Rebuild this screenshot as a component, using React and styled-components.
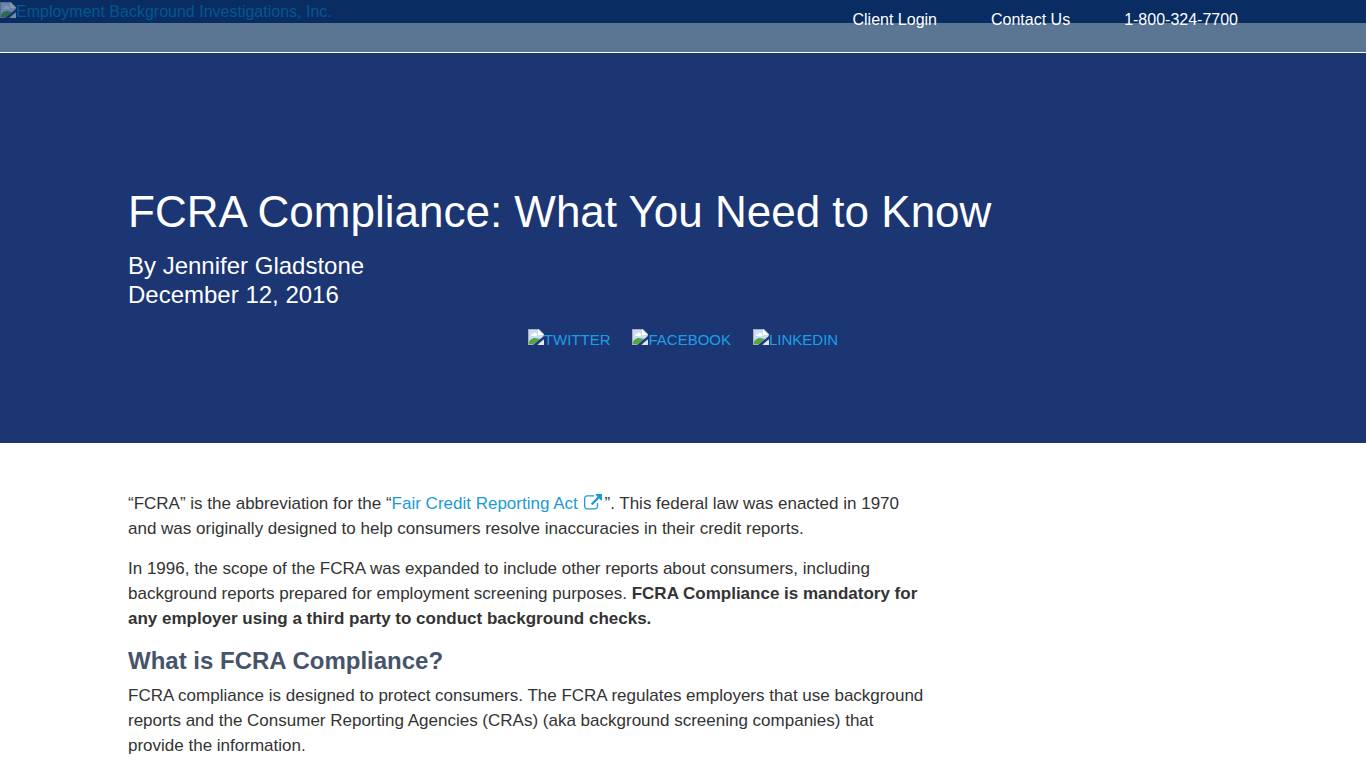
import React from "react";
import styled, { createGlobalStyle } from "styled-components";

const socialLinks = ["TWITTER", "FACEBOOK", "LINKEDIN"];

const BrokenImage = () => (
  <MissingIcon viewBox="0 0 16 16" aria-hidden="true">
    <path d="M0 0h11l5 5v11H0z" fill="#a9adb3" />
    <path d="M1 1h9l5 5v9H1z" fill="#c9dcf8" />
    <path d="M10 0l6 6h-6z" fill="#fff" />
    <path d="M3 7a2 2 0 0 1 2-2 2 2 0 0 1 4 2z" fill="#fff" />
    <path d="M1 15v-2c1-2 3-4 6-4l5 1-6 5z" fill="#52a83b" />
    <path d="M16 7v3l-7 6H5z" fill="#1c3573" />
    <path d="M16 11v5h-6z" fill="#e4e6ea" />
  </MissingIcon>
);

const ExternalLink = () => (
  <LinkIcon viewBox="0 0 1792 1792" aria-hidden="true">
    <path
      fill="currentColor"
      d="M1408 928v320q0 119-84.5 203.5t-203.5 84.5h-832q-119 0-203.5-84.5t-84.5-203.5v-832q0-119 84.5-203.5t203.5-84.5h704q14 0 23 9t9 23v64q0 14-9 23t-23 9h-704q-66 0-113 47t-47 113v832q0 66 47 113t113 47h832q66 0 113-47t47-113v-320q0-14 9-23t23-9h64q14 0 23 9t9 23zm384-864v512q0 26-19 45t-45 19-45-19l-176-176-652 652q-10 10-23 10t-23-10l-114-114q-10-10-10-23t10-23l652-652-176-176q-19-19-19-45t19-45 45-19h512q26 0 45 19t19 45z"
    />
  </LinkIcon>
);

const App = () => {
  return (
    <>
      <GlobalStyle />
      <Header>
        <LogoLink href="#home">
          <BrokenImage />
          Employment Background Investigations, Inc.
        </LogoLink>
        <TopNav>
          <TopLink href="#login">Client Login</TopLink>
          <TopLink href="#contact">Contact Us</TopLink>
          <TopLink href="tel:18003247700">1-800-324-7700</TopLink>
        </TopNav>
      </Header>

      <Hero>
        <Container>
          <Title>FCRA Compliance: What You Need to Know</Title>
          <Byline>
            By Jennifer Gladstone
            <br />
            December 12, 2016
          </Byline>
          <Social>
            {socialLinks.map((name) => (
              <SocialLink key={name} href={"#" + name.toLowerCase()}>
                <BrokenImage />
                {name}
              </SocialLink>
            ))}
          </Social>
        </Container>
      </Hero>

      <Container>
        <Article>
          <Text>
            “FCRA” is the abbreviation for the “
            <TextLink href="#fcra">
              Fair Credit Reporting Act <ExternalLink />
            </TextLink>
            ”. This federal law was enacted in 1970 and was originally designed
            to help consumers resolve inaccuracies in their credit reports.
          </Text>
          <Text>
            In 1996, the scope of the FCRA was expanded to include other reports
            about consumers, including background reports prepared for
            employment screening purposes.{" "}
            <strong>
              FCRA Compliance is mandatory for any employer using a third party
              to conduct background checks.
            </strong>
          </Text>
          <SubTitle>What is FCRA Compliance?</SubTitle>
          <Text>
            FCRA compliance is designed to protect consumers. The FCRA regulates
            employers that use background reports and the Consumer Reporting
            Agencies (CRAs) (aka background screening companies) that provide
            the information.
          </Text>
        </Article>
      </Container>
    </>
  );
};

export default App;

const GlobalStyle = createGlobalStyle`
  * {
    box-sizing: border-box;
  }

  body {
    margin: 0;
    background: #fff;
    color: #333;
    font-family: "Liberation Sans", Arial, sans-serif;
    font-size: 17px;
    line-height: 25px;
  }
`;

const Container = styled.div`
  max-width: 1366px;
  margin: 0 auto;
  padding: 0 128px;
`;

const Header = styled.header`
  display: flex;
  justify-content: space-between;
  align-items: flex-start;
  height: 53px;
  padding-right: 128px;
  background: linear-gradient(#092d62 23px, #5a7693 23px);
  border-bottom: 1px solid #fff;
`;

const LogoLink = styled.a`
  display: flex;
  color: #035791;
  font-size: 16px;
  line-height: 24px;
  text-decoration: none;

  svg {
    margin-top: 2px;
    opacity: 0.5;
  }
`;

const TopNav = styled.nav`
  display: flex;
  gap: 54px;
  padding-top: 8px;
`;

const TopLink = styled.a`
  color: #fff;
  font-size: 16px;
  line-height: 24px;
  text-decoration: none;
`;

const MissingIcon = styled.svg`
  width: 16px;
  height: 16px;
  flex: none;
`;

const Hero = styled.section`
  min-height: 390px;
  padding: 132px 0 88px;
  background: #1c3573;
  color: #fff;
`;

const Title = styled.h1`
  margin: 0 0 12px;
  font-size: 44px;
  font-weight: 400;
  line-height: 54px;
`;

const Byline = styled.p`
  margin: 0 0 20px;
  font-size: 24px;
  line-height: 29px;
`;

const Social = styled.div`
  display: flex;
  justify-content: center;
  gap: 22px;
`;

const SocialLink = styled.a`
  display: flex;
  color: #1ba0e8;
  font-size: 15px;
  line-height: 22px;
  text-decoration: none;
`;

const Article = styled.article`
  max-width: 800px;
  padding-top: 48px;
`;

const Text = styled.p`
  margin: 0 0 15px;

  &:last-child {
    margin-bottom: 0;
  }
`;

const TextLink = styled.a`
  color: #1a9bd7;
  text-decoration: none;
`;

const LinkIcon = styled.svg`
  width: 18px;
  height: 18px;
  margin: 0 2px;
  vertical-align: -3px;
`;

const SubTitle = styled.h2`
  margin: 0 0 8px;
  color: #46546a;
  font-size: 24px;
  line-height: 29px;
`;
